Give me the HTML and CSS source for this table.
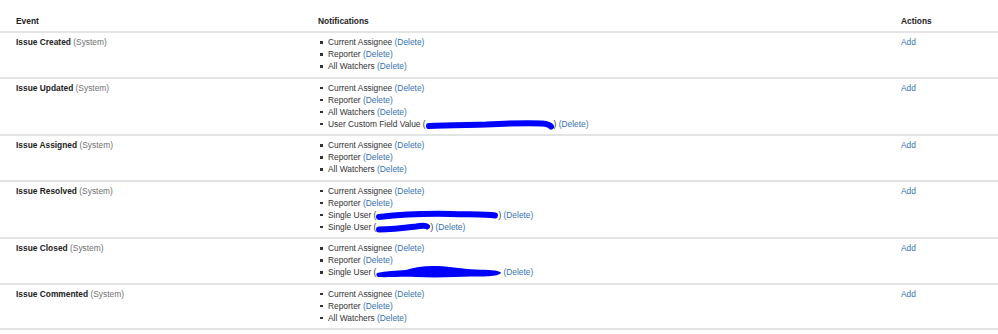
FILE: index.html
```html
<!DOCTYPE html>
<html>
<head>
<meta charset="utf-8">
<link rel="stylesheet" href="styles.css">
</head>
<body>
<table class="notif">
  <colgroup><col class="c-event"><col class="c-notif"><col class="c-act"></colgroup>
  <thead>
    <tr><th>Event</th><th>Notifications</th><th>Actions</th></tr>
  </thead>
  <tbody>
    <tr>
      <td><b>Issue Created</b> <span class="sys">(System)</span></td>
      <td><ul>
        <li>Current Assignee <a>(Delete)</a></li>
        <li>Reporter <a>(Delete)</a></li>
        <li>All Watchers <a>(Delete)</a></li>
      </ul></td>
      <td><a>Add</a></td>
    </tr>
    <tr>
      <td><b>Issue Updated</b> <span class="sys">(System)</span></td>
      <td><ul>
        <li>Current Assignee <a>(Delete)</a></li>
        <li>Reporter <a>(Delete)</a></li>
        <li>All Watchers <a>(Delete)</a></li>
        <li>User Custom Field Value (<span class="redact r1"><svg width="128" height="12" viewBox="0 0 128 12"><path d="M3 8 C 20 7, 40 7, 60 6.5 C 80 5.5, 100 4.5, 116 5.5 C 121 6, 124 7, 125 8.5" fill="none" stroke="#0000ff" stroke-width="6" stroke-linecap="round"/></svg></span>) <a>(Delete)</a></li>
      </ul></td>
      <td><a>Add</a></td>
    </tr>
    <tr>
      <td><b>Issue Assigned</b> <span class="sys">(System)</span></td>
      <td><ul>
        <li>Current Assignee <a>(Delete)</a></li>
        <li>Reporter <a>(Delete)</a></li>
        <li>All Watchers <a>(Delete)</a></li>
      </ul></td>
      <td><a>Add</a></td>
    </tr>
    <tr>
      <td><b>Issue Resolved</b> <span class="sys">(System)</span></td>
      <td><ul>
        <li>Current Assignee <a>(Delete)</a></li>
        <li>Reporter <a>(Delete)</a></li>
        <li>Single User (<span class="redact r2"><svg width="122" height="12" viewBox="0 0 122 12"><path d="M3 8 C 25 5.5, 50 4.5, 75 5 C 95 5.5, 112 5, 119 6.5" fill="none" stroke="#0000ff" stroke-width="6" stroke-linecap="round"/></svg></span>) <a>(Delete)</a></li>
        <li>Single User (<span class="redact r3"><svg width="54" height="12" viewBox="0 0 54 12"><path d="M3 8.5 C 15 8.5, 28 7, 40 5.5 C 46 4.5, 50 4.5, 51 5.5" fill="none" stroke="#0000ff" stroke-width="6" stroke-linecap="round"/></svg></span>) <a>(Delete)</a></li>
      </ul></td>
      <td><a>Add</a></td>
    </tr>
    <tr>
      <td><b>Issue Closed</b> <span class="sys">(System)</span></td>
      <td><ul>
        <li>Current Assignee <a>(Delete)</a></li>
        <li>Reporter <a>(Delete)</a></li>
        <li>Single User (<span class="redact r4"><svg width="127" height="14" viewBox="0 0 127 14"><path d="M1 8 C 10 6, 20 5.5, 30 5 C 40 1.5, 50 0.5, 62 1 C 75 1.5, 85 4, 100 4.5 C 112 5, 122 5, 125 7.5 C 124 11.5, 110 11.5, 95 11.5 C 80 12, 60 13, 40 12 C 25 11.5, 10 12.5, 2 12 C 0 11, 0 9, 1 8 Z" fill="#0000ff"/></svg></span><a>(Delete)</a></li>
      </ul></td>
      <td><a>Add</a></td>
    </tr>
    <tr>
      <td><b>Issue Commented</b> <span class="sys">(System)</span></td>
      <td><ul>
        <li>Current Assignee <a>(Delete)</a></li>
        <li>Reporter <a>(Delete)</a></li>
        <li>All Watchers <a>(Delete)</a></li>
      </ul></td>
      <td><a>Add</a></td>
    </tr>
  </tbody>
</table>
</body>
</html>
```

FILE: styles.css
```css
html, body {
  margin: 0;
  padding: 0;
  background: #fff;
}
body {
  font-family: "Liberation Sans", Arial, sans-serif;
  font-size: 8.4px;
  line-height: 12px;
  color: #333;
}
.notif {
  width: 100%;
  border-collapse: collapse;
  table-layout: fixed;
  margin-top: 11px;
}
.c-event { width: 310px; }
.c-act { width: 105px; }
.notif th {
  text-align: left;
  font-weight: bold;
  color: #222;
  padding: 4px 8px 4px 8px;
  border-bottom: 2px solid #e4e4e4;
}
.notif td {
  vertical-align: top;
  padding: 3px 8px 4.5px 8px;
  border-bottom: 2px solid #e4e4e4;
}
.notif th:first-child,
.notif td:first-child {
  padding-left: 16px;
}
.notif b {
  color: #222;
}
.sys {
  color: #707070;
}
a {
  color: #3572b0;
}
ul {
  list-style: none;
  margin: 0;
  padding: 0 0 0 10px;
}
li {
  position: relative;
  white-space: nowrap;
}
li::before {
  content: "";
  position: absolute;
  left: -8px;
  top: 5px;
  width: 2.5px;
  height: 2.5px;
  background: #333;
}
.redact {
  display: inline-block;
  vertical-align: top;
  height: 12px;
}
.redact svg {
  display: block;
  overflow: visible;
}
.r4 svg {
  margin-top: -1px;
}
```
